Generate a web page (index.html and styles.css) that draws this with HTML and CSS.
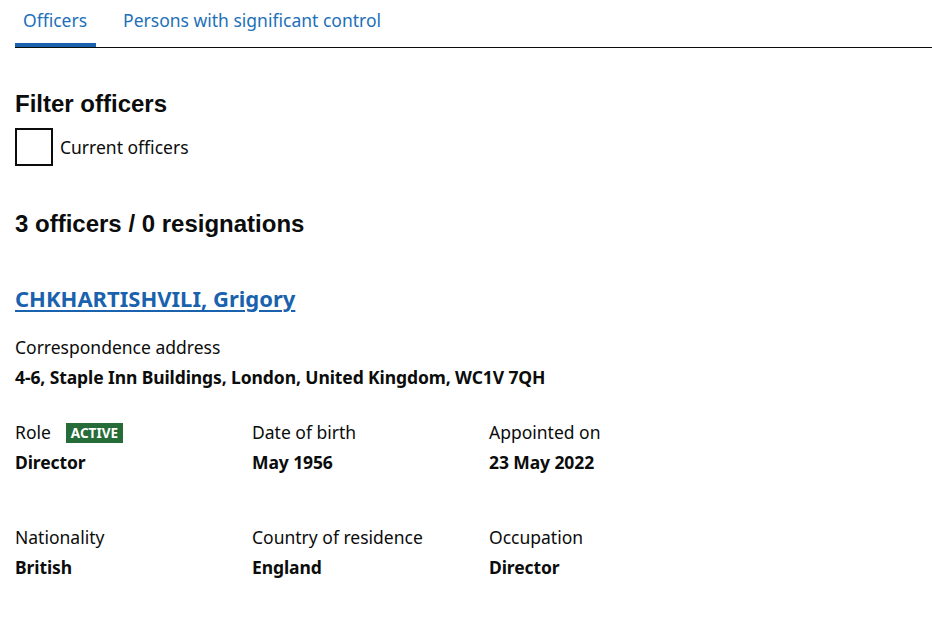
FILE: index.html
```html
<!DOCTYPE html>
<html lang="en">
<head>
<meta charset="utf-8">
<title>Officers</title>
<link rel="stylesheet" href="styles.css">
</head>
<body>
<main class="page">
  <nav class="tabs">
    <a class="tab tab-active" href="#">Officers</a>
    <a class="tab" href="#">Persons with significant control</a>
  </nav>

  <h2 class="heading">Filter officers</h2>
  <label class="check">
    <span class="check-box"></span>
    <span class="check-label">Current officers</span>
  </label>

  <h2 class="heading count">3 officers / 0 resignations</h2>

  <section class="officer">
    <h3 class="officer-name"><a href="#">CHKHARTISHVILI, Grigory</a></h3>
    <div class="field">
      <div class="label">Correspondence address</div>
      <div class="value">4-6, Staple Inn Buildings, London, United Kingdom, WC1V 7QH</div>
    </div>
    <div class="grid">
      <div class="field">
        <div class="label">Role <span class="tag">Active</span></div>
        <div class="value">Director</div>
      </div>
      <div class="field">
        <div class="label">Date of birth</div>
        <div class="value">May 1956</div>
      </div>
      <div class="field">
        <div class="label">Appointed on</div>
        <div class="value">23 May 2022</div>
      </div>
      <div class="field">
        <div class="label">Nationality</div>
        <div class="value">British</div>
      </div>
      <div class="field">
        <div class="label">Country of residence</div>
        <div class="value">England</div>
      </div>
      <div class="field">
        <div class="label">Occupation</div>
        <div class="value">Director</div>
      </div>
    </div>
  </section>
</main>
</body>
</html>
```

FILE: styles.css
```css
html, body {
  margin: 0;
  padding: 0;
  background: #ffffff;
}
body {
  font-family: "Noto Sans", "Liberation Sans", Arial, sans-serif;
  color: #0b0c0c;
  font-size: 17.5px;
  line-height: 25px;
}
.page {
  padding: 0 0 0 15px;
}
.tabs {
  display: flex;
  border-bottom: 1px solid #0b0c0c;
  height: 48px;
  box-sizing: border-box;
}
.tab {
  display: block;
  color: #1d70b8;
  text-decoration: none;
  padding: 8px 9px 0 8px;
  margin-right: 19px;
  line-height: 25px;
  box-sizing: border-box;
  height: 47px;
}
.tab-active {
  border-bottom: 4px solid #1a62ad;
}
.heading {
  font-family: "Liberation Sans", Arial, sans-serif;
  font-weight: 700;
  font-size: 24px;
  line-height: 30px;
  margin: 41px 0 0;
}
.check {
  display: flex;
  align-items: center;
  margin-top: 9px;
}
.check-box {
  width: 38px;
  height: 38px;
  border: 2px solid #0b0c0c;
  box-sizing: border-box;
  margin-right: 7px;
}
.count {
  margin-top: 43px;
}
.officer-name {
  margin: 45px 0 0;
  font-size: 22px;
  line-height: 28px;
  font-weight: 700;
}
.officer-name a {
  color: #1a62ad;
  text-decoration: underline;
  text-decoration-thickness: 2px;
  text-underline-offset: 3px;
}
.officer-name + .field {
  margin-top: 23px;
}
.label {
  line-height: 25px;
  display: flex;
  align-items: center;
}
.value {
  font-weight: 700;
  margin-top: 5px;
  line-height: 25px;
  letter-spacing: -0.1px;
}
.grid {
  display: grid;
  grid-template-columns: 237px 237px 237px;
  row-gap: 50px;
  margin-top: 30px;
}
.tag {
  display: inline-block;
  background: #256c38;
  color: #ffffff;
  font-size: 13.5px;
  font-weight: 700;
  text-transform: uppercase;
  line-height: 20px;
  padding: 0 5px;
  margin-left: 15px;
}
```
